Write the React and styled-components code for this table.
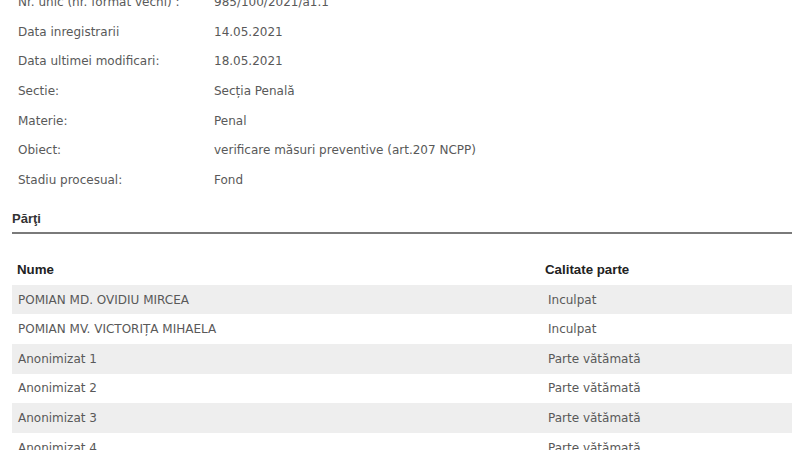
import React from "react";
import styled, { createGlobalStyle } from "styled-components";

const GlobalStyle = createGlobalStyle`
  html, body {
    margin: 0;
    padding: 0;
    background: #fff;
    overflow: hidden;
  }
`;

const Page = styled.div`
  width: 780px;
  padding: 0 8px 0 12px;
  font-family: "DejaVu Sans", Verdana, sans-serif;
  font-size: 12px;
  color: #595959;
`;

const InfoList = styled.div`
  margin-top: -13px;
  padding-left: 6px;
  display: flex;
  flex-direction: column;
`;

const InfoRow = styled.div`
  display: grid;
  grid-template-columns: 196px 1fr;
  height: 29.7px;
  align-items: center;
`;

const SectionTitle = styled.h3`
  margin: 16px 0 0;
  padding-bottom: 5px;
  border-bottom: 2px solid #7a7a7a;
  font-family: "Liberation Sans", Arial, sans-serif;
  font-size: 13px;
  font-weight: bold;
  color: #333;
  line-height: 16px;
`;

const Table = styled.div`
  margin-top: 21px;
  display: flex;
  flex-direction: column;
`;

const HeadRow = styled.div`
  display: grid;
  grid-template-columns: 533px 1fr;
  height: 30px;
  align-items: center;
  font-family: "Liberation Sans", Arial, sans-serif;
  font-size: 13.3px;
  font-weight: bold;
  color: #222;
`;

const HeadCell = styled.div`
  padding-left: ${({ $pad }) => $pad}px;
`;

const Row = styled.div`
  display: grid;
  grid-template-columns: 533px 1fr;
  height: 29.6px;
  align-items: center;
  background: ${({ $odd }) => ($odd ? "#eeeeee" : "#fff")};
`;

const Cell = styled.div`
  padding-left: ${({ $pad }) => $pad}px;
  white-space: nowrap;
`;

const info = [
  ["Nr. unic (nr. format vechi) :", "985/100/2021/a1.1"],
  ["Data inregistrarii", "14.05.2021"],
  ["Data ultimei modificari:", "18.05.2021"],
  ["Sectie:", "Secția Penală"],
  ["Materie:", "Penal"],
  ["Obiect:", "verificare măsuri preventive (art.207 NCPP)"],
  ["Stadiu procesual:", "Fond"],
];

const parti = [
  ["POMIAN MD. OVIDIU MIRCEA", "Inculpat"],
  ["POMIAN MV. VICTORIȚA MIHAELA", "Inculpat"],
  ["Anonimizat 1", "Parte vătămată"],
  ["Anonimizat 2", "Parte vătămată"],
  ["Anonimizat 3", "Parte vătămată"],
  ["Anonimizat 4", "Parte vătămată"],
];

export default function App() {
  return (
    <>
      <GlobalStyle />
      <Page>
        <InfoList>
          {info.map(([label, value]) => (
            <InfoRow key={label}>
              <span>{label}</span>
              <span>{value}</span>
            </InfoRow>
          ))}
        </InfoList>
        <SectionTitle>Părţi</SectionTitle>
        <Table>
          <HeadRow>
            <HeadCell $pad={5}>Nume</HeadCell>
            <HeadCell $pad={0}>Calitate parte</HeadCell>
          </HeadRow>
          {parti.map(([name, role], i) => (
            <Row key={name} $odd={i % 2 === 0}>
              <Cell $pad={6}>{name}</Cell>
              <Cell $pad={3}>{role}</Cell>
            </Row>
          ))}
        </Table>
      </Page>
    </>
  );
}
